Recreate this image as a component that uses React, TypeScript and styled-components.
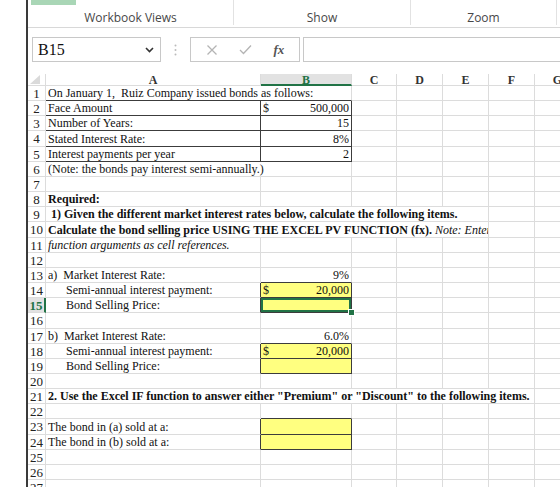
import React from "react";
import styled, { createGlobalStyle, css } from "styled-components";

const GlobalStyle = createGlobalStyle`
  html, body { margin: 0; padding: 0; background: #ffffff; }
  body { overflow: hidden; }
`;

const GRID_LINE = "#dcdcdc";
const DARK_LINE = "#3c3c3c";
const EXCEL_GREEN = "#217346";
const COL_TEMPLATE = "18px 215px 91px 45px 46px 46px 46px 46px";
const COLS = ["A", "B", "C", "D", "E", "F", "G"];

const Page = styled.div`
  display: flex;
  width: 560px;
  height: 487px;
  overflow: hidden;
`;

const Gutter = styled.div`
  width: 26px;
  flex: none;
  background: #ffffff;
`;

const Window = styled.div`
  flex: 1;
  border-left: 2px solid #3a3a3a;
  display: flex;
  flex-direction: column;
  min-width: 0;
  overflow: hidden;
`;

const Ribbon = styled.div`
  flex: none;
  height: 27px;
  display: flex;
  border-bottom: 1px solid #d8d8d8;
`;

const RibbonGroup = styled.div<{ $w: number }>`
  width: ${(p) => p.$w}px;
  flex: none;
  display: flex;
  flex-direction: column;
  justify-content: space-between;
  align-items: center;
  border-right: 1px solid #e2e2e2;
  margin-bottom: 2px;
`;

const ActiveView = styled.div`
  align-self: flex-start;
  margin-left: 3px;
  width: 45px;
  height: 5px;
  background: #a9d6b6;
`;

const Spacer = styled.div`
  height: 5px;
`;

const GroupLabel = styled.span`
  font-family: "Open Sans", "Liberation Sans", sans-serif;
  font-size: 12px;
  color: #484848;
  line-height: 14px;
`;

const FormulaBar = styled.div`
  flex: none;
  height: 46px;
  display: flex;
  align-items: flex-start;
  padding-top: 9px;
  box-sizing: border-box;
`;

const NameBox = styled.div`
  margin-left: 4px;
  width: 129px;
  height: 25px;
  box-sizing: border-box;
  border: 1px solid #c8c8c8;
  display: flex;
  align-items: center;
  justify-content: space-between;
  padding: 0 6px 0 5px;
  font-family: "Liberation Serif", serif;
  font-size: 16px;
  color: #111;
`;

const Dots = styled.div`
  width: 29px;
  height: 25px;
  display: flex;
  justify-content: center;
  align-items: center;
`;

const FxBox = styled.div`
  width: 110px;
  height: 25px;
  box-sizing: border-box;
  border: 1px solid #c8c8c8;
  display: flex;
  align-items: center;
  justify-content: space-around;
  padding: 0 4px;
`;

const FxLabel = styled.span`
  font-family: "Liberation Serif", serif;
  font-style: italic;
  font-size: 13px;
  font-weight: bold;
  color: #555;
`;

const FormulaInput = styled.div`
  margin-left: 3px;
  flex: 1;
  height: 25px;
  box-sizing: border-box;
  border: 1px solid #c8c8c8;
  border-right: none;
`;

const Sheet = styled.div`
  flex: none;
  display: grid;
  grid-template-columns: ${COL_TEMPLATE};
  grid-template-rows: 12px;
  grid-auto-rows: 15.16px;
  font-family: "Liberation Serif", "Times New Roman", serif;
  color: #111;
`;

const Corner = styled.div`
  border-right: 1px solid ${GRID_LINE};
  border-bottom: 1px solid ${GRID_LINE};
  display: flex;
  align-items: flex-end;
  padding: 0 0 1px 2px;
  box-sizing: border-box;
`;

const ColHead = styled.div<{ $active?: boolean }>`
  box-sizing: border-box;
  border-right: 1px solid ${GRID_LINE};
  border-bottom: ${(p) => (p.$active ? `2px solid ${EXCEL_GREEN}` : `1px solid ${GRID_LINE}`)};
  background: ${(p) => (p.$active ? "#e2e2e2" : "#ffffff")};
  color: ${(p) => (p.$active ? EXCEL_GREEN : "#333")};
  font-weight: bold;
  font-size: 12px;
  line-height: 12px;
  text-align: center;
  overflow: hidden;
`;

const RowHead = styled.div<{ $active?: boolean }>`
  box-sizing: border-box;
  border-right: ${(p) => (p.$active ? `2px solid ${EXCEL_GREEN}` : `1px solid ${GRID_LINE}`)};
  border-bottom: 1px solid ${GRID_LINE};
  background: ${(p) => (p.$active ? "#e2e2e2" : "#ffffff")};
  color: ${(p) => (p.$active ? EXCEL_GREEN : "#222")};
  font-weight: ${(p) => (p.$active ? "bold" : "normal")};
  font-size: 13px;
  line-height: 15px;
  text-align: center;
  overflow: hidden;
`;

type CellProps = {
  $span: number;
  $align: "left" | "right";
  $bold?: boolean;
  $italic?: boolean;
  $yellow?: boolean;
  $rightDark: boolean;
  $bottomDark: boolean;
  $selected?: boolean;
  $indent: number;
};

const Cell = styled.div<CellProps>`
  grid-column: span ${(p) => p.$span};
  box-sizing: border-box;
  position: relative;
  border-right: 1px solid ${(p) => (p.$rightDark ? DARK_LINE : GRID_LINE)};
  border-bottom: 1px solid ${(p) => (p.$bottomDark ? DARK_LINE : GRID_LINE)};
  background: ${(p) => (p.$yellow ? "#ffff80" : "#ffffff")};
  display: flex;
  align-items: flex-end;
  justify-content: ${(p) => (p.$align === "right" ? "flex-end" : "flex-start")};
  padding: 0 2px 0 ${(p) => 2 + p.$indent}px;
  font-size: 12px;
  line-height: 14px;
  font-weight: ${(p) => (p.$bold ? "bold" : "normal")};
  font-style: ${(p) => (p.$italic ? "italic" : "normal")};
  white-space: pre;
  overflow: hidden;
  ${(p) =>
    p.$selected &&
    css`
      overflow: visible;
      box-shadow: inset 0 0 0 2px ${EXCEL_GREEN};
      &::after {
        content: "";
        position: absolute;
        right: -4px;
        bottom: -4px;
        width: 5px;
        height: 5px;
        background: ${EXCEL_GREEN};
        border: 1px solid #ffffff;
        z-index: 2;
      }
    `}
`;

const Dollar = styled.span`
  margin-right: auto;
`;

const Note = styled.span`
  font-weight: normal;
  font-style: italic;
`;

type CellDef = {
  col: number;
  span?: number;
  text?: React.ReactNode;
  align?: "left" | "right";
  bold?: boolean;
  italic?: boolean;
  yellow?: boolean;
  dollar?: boolean;
  indent?: number;
  selected?: boolean;
};

const rows: Record<number, CellDef[]> = {
  1: [{ col: 0, span: 2, text: "On January 1,  Ruiz Company issued bonds as follows:" }],
  2: [
    { col: 0, text: "Face Amount" },
    { col: 1, text: "500,000", align: "right", dollar: true },
  ],
  3: [
    { col: 0, text: "Number of Years:" },
    { col: 1, text: "15", align: "right" },
  ],
  4: [
    { col: 0, text: "Stated Interest Rate:" },
    { col: 1, text: "8%", align: "right" },
  ],
  5: [
    { col: 0, text: "Interest payments per year" },
    { col: 1, text: "2", align: "right" },
  ],
  6: [{ col: 0, span: 2, text: "(Note: the bonds pay interest semi-annually.)" }],
  8: [{ col: 0, text: "Required:", bold: true }],
  9: [
    {
      col: 0,
      span: 5,
      bold: true,
      text: " 1) Given the different market interest rates below, calculate the following items.",
    },
  ],
  10: [
    {
      col: 0,
      span: 5,
      bold: true,
      text: (
        <>
          Calculate the bond selling price USING THE EXCEL PV FUNCTION (fx). <Note>Note: Enter all</Note>
        </>
      ),
    },
  ],
  11: [{ col: 0, italic: true, text: "function arguments as cell references." }],
  13: [
    { col: 0, text: "a)  Market Interest Rate:" },
    { col: 1, text: "9%", align: "right" },
  ],
  14: [
    { col: 0, indent: 18, text: "Semi-annual interest payment:" },
    { col: 1, text: "20,000", align: "right", dollar: true, yellow: true },
  ],
  15: [
    { col: 0, indent: 18, text: "Bond Selling Price:" },
    { col: 1, yellow: true, selected: true },
  ],
  17: [
    { col: 0, text: "b)  Market Interest Rate:" },
    { col: 1, text: "6.0%", align: "right" },
  ],
  18: [
    { col: 0, indent: 18, text: "Semi-annual interest payment:" },
    { col: 1, text: "20,000", align: "right", dollar: true, yellow: true },
  ],
  19: [
    { col: 0, indent: 18, text: "Bond Selling Price:" },
    { col: 1, yellow: true },
  ],
  21: [
    {
      col: 0,
      span: 6,
      bold: true,
      text: '2. Use the Excel IF function to answer either "Premium" or "Discount" to the following items.',
    },
  ],
  23: [
    { col: 0, text: "The bond in (a) sold at a:" },
    { col: 1, yellow: true },
  ],
  24: [
    { col: 0, text: "The bond in (b) sold at a:" },
    { col: 1, yellow: true },
  ],
};

const boxed = new Set(["0:2", "0:3", "0:4", "0:5", "1:2", "1:3", "1:4", "1:5", "1:14", "1:15", "1:18", "1:19", "1:23", "1:24"]);
const isBoxed = (c: number, r: number) => boxed.has(`${c}:${r}`);

const ROW_COUNT = 27;

const ChevronDown = () => (
  <svg width="9" height="6" viewBox="0 0 9 6">
    <path d="M1 1 L4.5 4.5 L8 1" fill="none" stroke="#333" strokeWidth="1.6" />
  </svg>
);

const VDots = () => (
  <svg width="3" height="12" viewBox="0 0 3 12">
    <circle cx="1.5" cy="1.5" r="1" fill="#bbb" />
    <circle cx="1.5" cy="6" r="1" fill="#bbb" />
    <circle cx="1.5" cy="10.5" r="1" fill="#bbb" />
  </svg>
);

const CrossIcon = () => (
  <svg width="12" height="12" viewBox="0 0 12 12">
    <path d="M1.5 1.5 L10.5 10.5 M10.5 1.5 L1.5 10.5" stroke="#b4b4b4" strokeWidth="1.3" />
  </svg>
);

const CheckIcon = () => (
  <svg width="13" height="11" viewBox="0 0 13 11">
    <path d="M1 6 L4.5 9.5 L12 1.5" fill="none" stroke="#b4b4b4" strokeWidth="1.3" />
  </svg>
);

const CornerTriangle = () => (
  <svg width="10" height="9" viewBox="0 0 10 9">
    <path d="M10 0 L10 9 L0 9 Z" fill="#dadada" />
  </svg>
);

const buildRow = (r: number) => {
  const defs = rows[r] || [];
  const out: React.ReactNode[] = [];
  out.push(
    <RowHead key={`h${r}`} $active={r === 15}>
      {r}
    </RowHead>
  );
  let c = 0;
  while (c < COLS.length) {
    const def = defs.find((d) => d.col === c) || { col: c };
    const span = def.span || 1;
    const last = c + span - 1;
    const selfBox = isBoxed(c, r);
    out.push(
      <Cell
        key={`${r}-${c}`}
        $span={span}
        $align={def.align || "left"}
        $bold={def.bold}
        $italic={def.italic}
        $yellow={def.yellow}
        $selected={def.selected}
        $indent={def.indent || 0}
        $rightDark={selfBox || isBoxed(last + 1, r)}
        $bottomDark={selfBox || isBoxed(c, r + 1)}
      >
        {def.dollar && <Dollar>$</Dollar>}
        {def.text}
      </Cell>
    );
    c += span;
  }
  return out;
};

const App = () => {
  return (
    <Page>
      <GlobalStyle />
      <Gutter />
      <Window>
        <Ribbon>
          <RibbonGroup $w={205}>
            <ActiveView />
            <GroupLabel>Workbook Views</GroupLabel>
          </RibbonGroup>
          <RibbonGroup $w={176}>
            <Spacer />
            <GroupLabel>Show</GroupLabel>
          </RibbonGroup>
          <RibbonGroup $w={145}>
            <Spacer />
            <GroupLabel>Zoom</GroupLabel>
          </RibbonGroup>
        </Ribbon>
        <FormulaBar>
          <NameBox>
            <span>B15</span>
            <ChevronDown />
          </NameBox>
          <Dots>
            <VDots />
          </Dots>
          <FxBox>
            <CrossIcon />
            <CheckIcon />
            <FxLabel>fx</FxLabel>
          </FxBox>
          <FormulaInput />
        </FormulaBar>
        <Sheet>
          <Corner>
            <CornerTriangle />
          </Corner>
          {COLS.map((c) => (
            <ColHead key={c} $active={c === "B"}>
              {c}
            </ColHead>
          ))}
          {Array.from({ length: ROW_COUNT }, (_, i) => buildRow(i + 1))}
        </Sheet>
      </Window>
    </Page>
  );
};

export default App;
